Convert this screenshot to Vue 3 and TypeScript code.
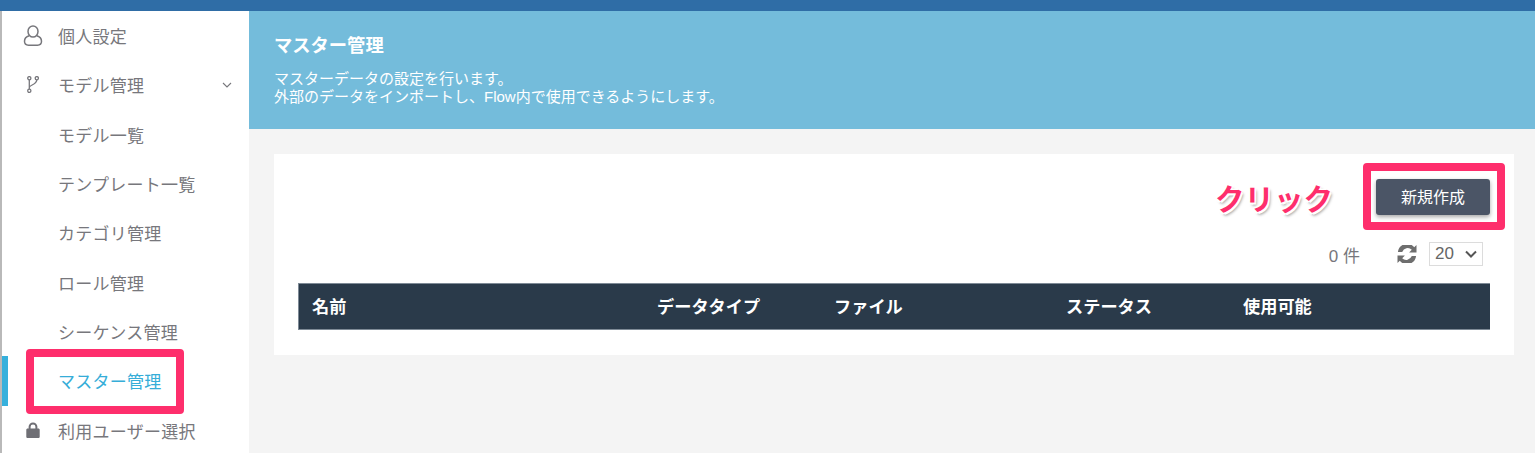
<script setup lang="ts">
interface NavItem { label: string; icon?: 'user' | 'branch' | 'lock'; active?: boolean; chevron?: boolean }
const nav: NavItem[] = [
  { label: '個人設定', icon: 'user' },
  { label: 'モデル管理', icon: 'branch', chevron: true },
  { label: 'モデル一覧' },
  { label: 'テンプレート一覧' },
  { label: 'カテゴリ管理' },
  { label: 'ロール管理' },
  { label: 'シーケンス管理' },
  { label: 'マスター管理', active: true },
  { label: '利用ユーザー選択', icon: 'lock' },
]
const columns = [
  { label: '名前', width: '345px' },
  { label: 'データタイプ', width: '177px' },
  { label: 'ファイル', width: '232px' },
  { label: 'ステータス', width: '177px' },
  { label: '使用可能', width: '200px' },
]
</script>

<template>
  <div class="page">
    <div class="topbar"></div>
    <div class="body">
      <aside class="sidebar">
        <div v-for="item in nav" :key="item.label" class="nav-item" :class="{ active: item.active }">
          <span class="nav-icon">
            <svg v-if="item.icon === 'user'" width="20" height="21" viewBox="0 0 20 21" fill="none" stroke="#77777c" stroke-width="1.5">
              <ellipse cx="10" cy="6.500" rx="5" ry="5.500" />
              <path d="M6.200 10.800C3 11.800 1.500 14 1.500 16.300c0 2.700 1.700 3.900 4 3.900h9c2.300 0 4-1.200 4-3.900 0-2.300-1.500-4.500-4.700-5.500" />
            </svg>
            <svg v-else-if="item.icon === 'branch'" width="12" height="17" viewBox="0 0 12 17" fill="none" stroke="#77777c" stroke-width="1.300">
              <circle cx="2.300" cy="2.200" r="1.600" />
              <circle cx="2.300" cy="14.800" r="1.600" />
              <circle cx="9.800" cy="2.200" r="1.600" />
              <path d="M2.300 3.800v9.400M2.300 11.500c.3-2.700 7.200-2.500 7.500-7.700" />
            </svg>
            <svg v-else-if="item.icon === 'lock'" width="14" height="16" viewBox="0 0 14 16">
              <path fill="#6f6f75" d="M2.600 6.400V4.800a4.400 4.400 0 0 1 8.800 0v1.600h1c.7 0 1.300.6 1.300 1.300v7c0 .7-.6 1.300-1.300 1.300H1.600c-.7 0-1.300-.6-1.300-1.300v-7c0-.7.6-1.300 1.300-1.300h1zm2 0h4.800V4.800a2.400 2.400 0 0 0-4.800 0v1.600z" />
            </svg>
          </span>
          <span class="nav-label">{{ item.label }}</span>
          <svg v-if="item.chevron" class="chevron" width="10" height="6" viewBox="0 0 10 6" fill="none" stroke="#77777c" stroke-width="1.100">
            <path d="M1 1l4 4 4-4" />
          </svg>
          <span v-if="item.active" class="callout nav-callout"></span>
        </div>
      </aside>
      <main class="main">
        <header class="hero">
          <h1>マスター管理</h1>
          <p>マスターデータの設定を行います。<br />外部のデータをインポートし、Flow内で使用できるようにします。</p>
        </header>
        <section class="card">
          <div class="actions">
            <span class="click-label">クリック</span>
            <span class="button-wrap">
              <button class="create" type="button">新規作成</button>
              <span class="callout button-callout"></span>
            </span>
          </div>
          <div class="meta">
            <span class="count">0 件</span>
            <svg class="refresh" width="20" height="18" viewBox="0 0 20 18">
              <path fill="#6e6e6e" d="M19.500 0v7.400h-7.400l2.700-2.700a6 6 0 0 0-9.600 2.200H.9A9.200 9.200 0 0 1 17.200 2.300L19.500 0zM.5 18v-7.400h7.400l-2.700 2.700a6 6 0 0 0 9.600-2.200h4.300A9.200 9.200 0 0 1 2.800 15.700L.5 18z" />
            </svg>
            <span class="select">
              <span>20</span>
              <svg width="12" height="8" viewBox="0 0 12 8" fill="none" stroke="#555" stroke-width="2"><path d="M1 1.500l5 5 5-5" /></svg>
            </span>
          </div>
          <div class="thead">
            <span v-for="col in columns" :key="col.label" class="th" :style="{ width: col.width }">{{ col.label }}</span>
          </div>
        </section>
      </main>
    </div>
  </div>
</template>

<style>
html, body { margin: 0; padding: 0; background: #f4f4f4; overflow: hidden; }
</style>

<style scoped>
.page {
  width: 1535px;
  height: 453px;
  overflow: hidden;
  display: flex;
  flex-direction: column;
  font-family: "Liberation Sans", "Noto Sans CJK JP", sans-serif;
  background: #f4f4f4;
}
.topbar { height: 11px; flex: none; background: #2f6da6; }
.body { display: flex; flex: 1; min-height: 0; border-left: 2px solid #b9b9b9; }
.sidebar {
  width: 247px;
  flex: none;
  background: #fff;
  box-sizing: border-box;
}
.nav-item {
  position: relative;
  height: 49.330px;
  display: flex;
  align-items: center;
  color: #77777c;
  font-size: 17px;
  letter-spacing: 0.250px;
  box-sizing: border-box;
  padding-right: 16px;
}
.nav-item.active { color: #36add8; }
.nav-item.active::before {
  content: "";
  position: absolute;
  left: 0;
  top: 0;
  bottom: 0;
  width: 6px;
  background: #36b0dc;
}
.nav-icon {
  width: 20px;
  margin: 0 15px 0 21px;
  flex: none;
  display: flex;
  align-items: center;
  justify-content: center;
}
.nav-label { flex: 1; white-space: nowrap; }
.chevron { flex: none; margin-right: 1px; }
.callout {
  position: absolute;
  border: 8px solid #fe2e6c;
  border-radius: 4px;
  box-sizing: border-box;
  pointer-events: none;
}
.nav-callout { left: 24px; top: -7px; width: 158px; height: 65px; }
.main { flex: 1; min-width: 0; }
.hero {
  height: 118px;
  box-sizing: border-box;
  background: #74bcdb;
  color: #fff;
  padding: 22px 25px 0;
}
.hero h1 { margin: 0; font-size: 18.300px; line-height: 26px; font-weight: 700; }
.hero p { margin: 11px 0 0; font-size: 15px; line-height: 18px; }
.card {
  margin: 25px 21px 0 25px;
  height: 201px;
  box-sizing: border-box;
  background: #fff;
  padding: 25px 24px 0;
}
.actions { display: flex; justify-content: flex-end; align-items: center; height: 36px; }
.click-label {
  font-size: 29.500px;
  font-weight: 700;
  color: #fe2e6c;
  margin-right: 43px;
  text-shadow: 1.500px 1.500px 0 #fff, -1.500px -1.500px 0 #fff, 1.500px -1.500px 0 #fff, -1.500px 1.500px 0 #fff, 2px 3px 3px rgba(0,0,0,.4);
}
.button-wrap { position: relative; display: block; }
.create {
  display: block;
  width: 114px;
  height: 36px;
  border: 0;
  border-radius: 3px;
  padding: 0 0 3px;
  background: #4b5566;
  color: #fff;
  font: inherit;
  font-size: 16px;
  box-shadow: 0 2px 4px rgba(0, 0, 0, .35);
}
.button-callout { left: -13px; top: -16px; width: 142px; height: 67px; }
.meta {
  display: flex;
  align-items: center;
  justify-content: flex-end;
  height: 24px;
  margin-top: 27px;
  margin-right: 6px;
  color: #77777c;
  font-size: 17px;
}
.count { margin-right: 37px; }
.refresh { margin-right: 12px; }
.select {
  width: 54px;
  height: 24px;
  box-sizing: border-box;
  border: 1px solid #dcdcdc;
  display: flex;
  align-items: center;
  justify-content: space-between;
  padding: 0 5px;
  margin-right: 1px;
  color: #666;
}
.thead {
  margin-top: 17px;
  height: 47px;
  display: flex;
  align-items: center;
  box-sizing: border-box;
  padding: 0 0 2px 13px;
  background: #2a3a4a;
  border: 1px solid #7e8a96;
  border-width: 1px 0 1px 1px;
}
.th {
  flex: none;
  color: #fff;
  font-size: 17.200px;
  font-weight: 700;
  white-space: nowrap;
}
</style>
